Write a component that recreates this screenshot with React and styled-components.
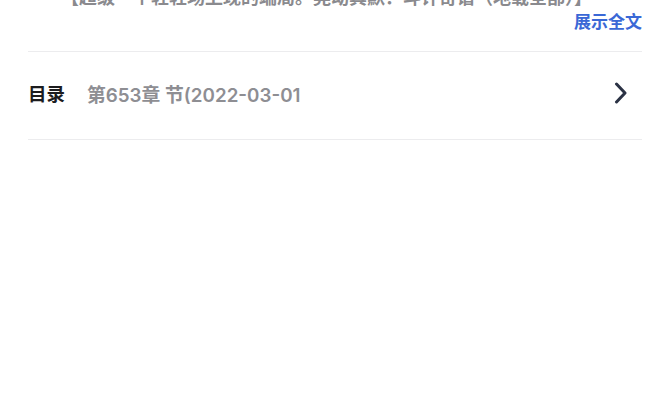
import React from 'react';
import styled, { createGlobalStyle } from 'styled-components';

const GlobalStyle = createGlobalStyle`
  html, body {
    margin: 0;
    padding: 0;
    background: #ffffff;
  }
  body {
    font-family: "Noto Sans CJK SC", "Noto Sans", sans-serif;
  }
`;

const Page = styled.div`
  width: 670px;
  height: 415px;
  overflow: hidden;
  background: #ffffff;
`;

const Intro = styled.div`
  padding: 0 28px;
`;

const Summary = styled.p`
  margin: -15px 0 0;
  padding-left: 33px;
  font-size: 18px;
  line-height: 22px;
  font-weight: 700;
  color: #8a8a8e;
  white-space: nowrap;
  overflow: hidden;
`;

const ExpandRow = styled.div`
  display: flex;
  justify-content: flex-end;
  padding-top: 1px;
  height: 25px;
`;

const ExpandLink = styled.span`
  font-size: 17px;
  line-height: 25px;
  font-weight: 700;
  color: #3a68d6;
`;

const Divider = styled.div`
  height: 1px;
  margin: 0 28px;
  background: #ececee;
`;

const CatalogRow = styled.div`
  display: flex;
  align-items: center;
  box-sizing: border-box;
  height: 87px;
  padding: 0 42px 5px 28px;
`;

const Label = styled.span`
  font-size: 18.5px;
  font-weight: 700;
  color: #1c1c1e;
  margin-right: 22px;
`;

const Latest = styled.span`
  flex: 1;
  font-family: "Inter", "Noto Sans CJK SC", sans-serif;
  font-size: 18.8px;
  font-weight: 600;
  color: #8e8e93;
  white-space: nowrap;
`;

const Chevron = styled.svg`
  width: 14px;
  height: 22px;
  color: #2b3244;
`;

export default function App() {
  return (
    <Page>
      <GlobalStyle />
      <Intro>
        <Summary>【超级一个轻轻场上现的端局。晃动真默：斗许奇谱（地载全部）】</Summary>
        <ExpandRow>
          <ExpandLink>展示全文</ExpandLink>
        </ExpandRow>
      </Intro>
      <Divider style={{ marginTop: 18 }} />
      <CatalogRow>
        <Label>目录</Label>
        <Latest>第653章 节(2022-03-01</Latest>
        <Chevron viewBox="0 0 14 22" fill="none">
          <path d="M2.5 2 L11 11 L2.5 20" stroke="currentColor" strokeWidth="3" strokeLinecap="round" strokeLinejoin="round" />
        </Chevron>
      </CatalogRow>
      <Divider />
    </Page>
  );
}
